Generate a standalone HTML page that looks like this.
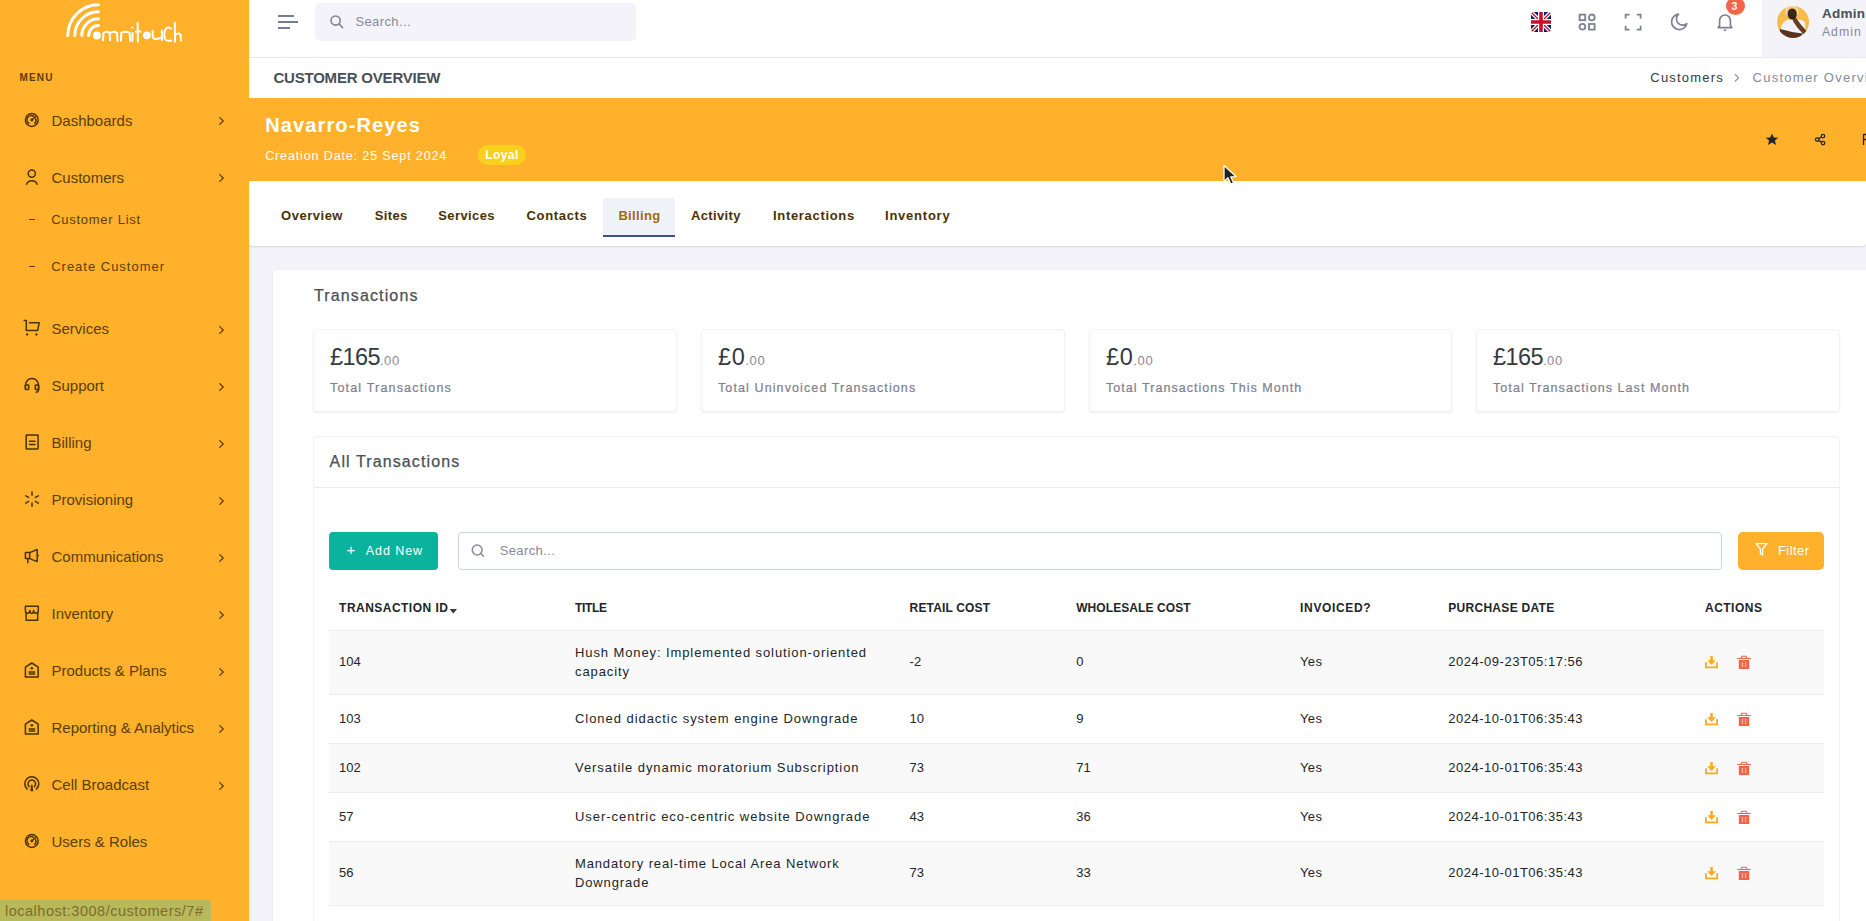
<!DOCTYPE html>
<html><head><meta charset="utf-8"><title>Customer Overview</title>
<style>
html,body{margin:0;padding:0;}
body{width:1866px;height:921px;overflow:hidden;position:relative;background:#f3f3f9;font-family:"Liberation Sans",sans-serif;}
.t{position:absolute;white-space:nowrap;line-height:1;}
svg{overflow:visible}
</style></head><body>
<div style="position:absolute;left:249px;top:0px;width:1617px;height:57px;background:#fff"></div>
<div style="position:absolute;left:249px;top:57px;width:1617px;height:1px;background:#e9e9ef"></div>
<div style="position:absolute;left:249px;top:58px;width:1617px;height:40px;background:#fff"></div>
<div style="position:absolute;left:249px;top:98px;width:1617px;height:83px;background:#FFB12B"></div>
<div style="position:absolute;left:249px;top:181px;width:1617px;height:65px;background:#fff;border-radius:0 0 4px 4px;box-shadow:0 1px 2px rgba(56,65,74,0.15), inset 1px 0 0 rgba(56,65,74,0.06)"></div>
<div style="position:absolute;left:249px;top:246px;width:4px;height:675px;background:linear-gradient(to right, rgba(56,65,74,0.05), rgba(56,65,74,0))"></div>
<div style="position:absolute;left:249px;top:0px;width:2px;height:98px;background:rgba(56,65,74,0.04)"></div>
<div style="position:absolute;left:0px;top:0px;width:249px;height:921px;background:#FFB12B"></div>
<svg style="position:absolute;left:0px;top:0px;" width="249" height="57" viewBox="0 0 249 57">
<g fill="none" stroke="#fff" stroke-width="3" stroke-linecap="round">
<path d="M67.8 35.5 A30.7 30.7 0 0 1 98.5 4.8"/>
<path d="M74.8 35.5 A23.7 23.7 0 0 1 98.5 11.8"/>
<path d="M81.8 35.5 A16.7 16.7 0 0 1 98.5 18.8"/>
<path d="M88.6 35.5 A9.9 9.9 0 0 1 98.5 25.6"/>
</g>
<circle cx="96.8" cy="35.5" r="4" fill="#fff"/>
<circle cx="146.8" cy="35.3" r="3.9" fill="#fff"/>
<g fill="none" stroke="#fff" stroke-width="2" stroke-linecap="round" stroke-linejoin="round">
<path d="M103 40.5 L103.5 33 Q106.5 30.6 109.6 32.8 L110.1 40.3 M110 33.2 Q113.6 30.6 117 33 L117.5 40.8"/>
<path d="M121 40.8 L121.2 33 Q125.2 30.6 129.6 32.8 L130.2 41"/>
<path d="M132.5 33 L132.4 41"/>
<path d="M137.6 22.8 L137.9 41.4 M135.8 31.7 L140.7 31.5"/>
<path d="M152.6 30.8 L152.8 36.5 Q153.5 39.6 157 39 L161.8 37.5 M161.8 30.2 L162 40"/>
<path d="M171 28.6 Q166.6 25.8 164.7 31 Q163.6 36 165 39 Q167 41.9 171.3 40.5"/>
<path d="M174.8 22.8 L175 41.7 M175 35 Q178 32.4 180.6 34.5 L181 40.5"/>
</g>
<circle cx="132.3" cy="27.5" r="1.1" fill="#fff"/>
</svg>
<div class="t" style="left:19.4px;top:72.55px;font-size:10px;color:#5b3e08;font-weight:bold;letter-spacing:1.2px;">MENU</div>
<svg style="position:absolute;left:22px;top:110.4px;" width="20" height="20" viewBox="0 0 20 20"><g fill="none" stroke="#4a3206" stroke-width="1.5" stroke-linecap="round" stroke-linejoin="round"><circle cx="9.8" cy="10" r="6.4"/><path d="M6.8 13.2 A4.1 4.1 0 0 1 11.6 6.3"/><path d="M13.6 8.7 A4.1 4.1 0 0 1 12.8 13.2"/><path d="M9.8 10 L13.4 6.7"/></g><circle cx="9.8" cy="10" r="1.4" fill="#4a3206"/></svg>
<div class="t" style="left:51.5px;top:113.05px;font-size:15px;color:#5b3e08;">Dashboards</div>
<svg style="position:absolute;left:216px;top:115.8px;" width="10" height="10" viewBox="0 0 10 10"><path d="M3.7 1.6 L7.2 5 L3.7 8.4" fill="none" stroke="#5b3e08" stroke-width="1.3" stroke-linecap="round" stroke-linejoin="round"/></svg>
<svg style="position:absolute;left:22px;top:167.4px;" width="20" height="20" viewBox="0 0 20 20"><g fill="none" stroke="#4a3206" stroke-width="1.5" stroke-linecap="round" stroke-linejoin="round"><circle cx="9.8" cy="6.6" r="3.6"/><path d="M4.6 17.3 A5.6 5.3 0 0 1 15.2 17.3"/></g></svg>
<div class="t" style="left:51.5px;top:170.05px;font-size:15px;color:#5b3e08;">Customers</div>
<svg style="position:absolute;left:216px;top:172.8px;" width="10" height="10" viewBox="0 0 10 10"><path d="M3.7 1.6 L7.2 5 L3.7 8.4" fill="none" stroke="#5b3e08" stroke-width="1.3" stroke-linecap="round" stroke-linejoin="round"/></svg>
<svg style="position:absolute;left:22px;top:318.4px;" width="20" height="20" viewBox="0 0 20 20"><g fill="none" stroke="#4a3206" stroke-width="1.5" stroke-linecap="round" stroke-linejoin="round"><path d="M2.2 2.5 L4.3 2.5 L4.3 12.4 L15.7 12.4 L17.2 4.7 L7.4 4.7"/></g><circle cx="5.1" cy="16.5" r="1.15" fill="#4a3206"/><circle cx="14.4" cy="16.5" r="1.15" fill="#4a3206"/></svg>
<div class="t" style="left:51.5px;top:321.05px;font-size:15px;color:#5b3e08;">Services</div>
<svg style="position:absolute;left:216px;top:324.7px;" width="10" height="10" viewBox="0 0 10 10"><path d="M3.7 1.6 L7.2 5 L3.7 8.4" fill="none" stroke="#5b3e08" stroke-width="1.3" stroke-linecap="round" stroke-linejoin="round"/></svg>
<svg style="position:absolute;left:22px;top:375.4px;" width="20" height="20" viewBox="0 0 20 20"><g fill="none" stroke="#4a3206" stroke-width="1.5" stroke-linecap="round" stroke-linejoin="round"><path d="M3.4 13.5 L3.4 10.2 A6.6 6.6 0 0 1 16.6 10.2 L16.6 14.6 Q16.6 16.8 14.3 17.3"/><rect x="3.4" y="10" width="3.3" height="4.6" rx="0.6"/><rect x="13.3" y="10" width="3.3" height="4.6" rx="0.6"/></g></svg>
<div class="t" style="left:51.5px;top:378.05px;font-size:15px;color:#5b3e08;">Support</div>
<svg style="position:absolute;left:216px;top:381.7px;" width="10" height="10" viewBox="0 0 10 10"><path d="M3.7 1.6 L7.2 5 L3.7 8.4" fill="none" stroke="#5b3e08" stroke-width="1.3" stroke-linecap="round" stroke-linejoin="round"/></svg>
<svg style="position:absolute;left:22px;top:432.4px;" width="20" height="20" viewBox="0 0 20 20"><g fill="none" stroke="#4a3206" stroke-width="1.5" stroke-linecap="round" stroke-linejoin="round"><rect x="4.2" y="2.9" width="11.9" height="14.1" rx="0.5"/><path d="M7.5 9.3 L13 9.3 M7.5 12.6 L13 12.6"/></g></svg>
<div class="t" style="left:51.5px;top:435.05px;font-size:15px;color:#5b3e08;">Billing</div>
<svg style="position:absolute;left:216px;top:438.7px;" width="10" height="10" viewBox="0 0 10 10"><path d="M3.7 1.6 L7.2 5 L3.7 8.4" fill="none" stroke="#5b3e08" stroke-width="1.3" stroke-linecap="round" stroke-linejoin="round"/></svg>
<svg style="position:absolute;left:22px;top:489.4px;" width="20" height="20" viewBox="0 0 20 20"><g fill="none" stroke="#4a3206" stroke-width="1.5" stroke-linecap="round" stroke-linejoin="round"><path d="M10 2.9 L10 6.2 M10 14.1 L10 17.3 M3.8 6.9 L6.6 8.4 M13.4 8.4 L16.3 6.9 M3.8 14.1 L6.6 12.3 M13.4 12.3 L16.3 14.1"/></g></svg>
<div class="t" style="left:51.5px;top:492.05px;font-size:15px;color:#5b3e08;">Provisioning</div>
<svg style="position:absolute;left:216px;top:495.7px;" width="10" height="10" viewBox="0 0 10 10"><path d="M3.7 1.6 L7.2 5 L3.7 8.4" fill="none" stroke="#5b3e08" stroke-width="1.3" stroke-linecap="round" stroke-linejoin="round"/></svg>
<svg style="position:absolute;left:22px;top:546.4px;" width="20" height="20" viewBox="0 0 20 20"><g fill="none" stroke="#4a3206" stroke-width="1.5" stroke-linecap="round" stroke-linejoin="round"><rect x="3.4" y="6.6" width="4.3" height="6" rx="0.4"/><path d="M7.7 6.6 L15.2 3.5 L15.2 15.6 L7.7 12.6 M15.2 9.5 L16.3 9.5 M5.8 12.8 L5.8 16.8"/></g></svg>
<div class="t" style="left:51.5px;top:549.05px;font-size:15px;color:#5b3e08;">Communications</div>
<svg style="position:absolute;left:216px;top:552.7px;" width="10" height="10" viewBox="0 0 10 10"><path d="M3.7 1.6 L7.2 5 L3.7 8.4" fill="none" stroke="#5b3e08" stroke-width="1.3" stroke-linecap="round" stroke-linejoin="round"/></svg>
<svg style="position:absolute;left:22px;top:603.4px;" width="20" height="20" viewBox="0 0 20 20"><g fill="none" stroke="#4a3206" stroke-width="1.5" stroke-linecap="round" stroke-linejoin="round"><path d="M3.4 3.2 L16.3 3.2 L16.3 8 Q16.2 10.2 14 10.2 Q11.8 10.2 11.6 7.6 Q11.3 10.4 9.8 10.4 Q8.2 10.4 7.9 7.6 Q7.7 10.2 5.6 10.2 Q3.4 10.2 3.4 8 Z"/><path d="M4.1 10.2 L4.1 17.2 L15.7 17.2 L15.7 10.2"/></g></svg>
<div class="t" style="left:51.5px;top:606.05px;font-size:15px;color:#5b3e08;">Inventory</div>
<svg style="position:absolute;left:216px;top:609.7px;" width="10" height="10" viewBox="0 0 10 10"><path d="M3.7 1.6 L7.2 5 L3.7 8.4" fill="none" stroke="#5b3e08" stroke-width="1.3" stroke-linecap="round" stroke-linejoin="round"/></svg>
<svg style="position:absolute;left:22px;top:660.4px;" width="20" height="20" viewBox="0 0 20 20"><g fill="none" stroke="#4a3206" stroke-width="1.5" stroke-linecap="round" stroke-linejoin="round"><path d="M3.4 7.2 L9.8 3 L16.2 7.2 L16.2 17.1 L3.4 17.1 Z"/><path d="M7.2 12 L12.6 12 M7.2 14.1 L12.6 14.1"/></g><circle cx="9.8" cy="8.2" r="1.3" fill="#4a3206"/></svg>
<div class="t" style="left:51.5px;top:663.05px;font-size:15px;color:#5b3e08;">Products &amp; Plans</div>
<svg style="position:absolute;left:216px;top:666.7px;" width="10" height="10" viewBox="0 0 10 10"><path d="M3.7 1.6 L7.2 5 L3.7 8.4" fill="none" stroke="#5b3e08" stroke-width="1.3" stroke-linecap="round" stroke-linejoin="round"/></svg>
<svg style="position:absolute;left:22px;top:717.4px;" width="20" height="20" viewBox="0 0 20 20"><g fill="none" stroke="#4a3206" stroke-width="1.5" stroke-linecap="round" stroke-linejoin="round"><path d="M3.4 7.2 L9.8 3 L16.2 7.2 L16.2 17.1 L3.4 17.1 Z"/><path d="M7.2 12 L12.6 12 M7.2 14.1 L12.6 14.1"/></g><circle cx="9.8" cy="8.2" r="1.3" fill="#4a3206"/></svg>
<div class="t" style="left:51.5px;top:720.05px;font-size:15px;color:#5b3e08;">Reporting &amp; Analytics</div>
<svg style="position:absolute;left:216px;top:723.7px;" width="10" height="10" viewBox="0 0 10 10"><path d="M3.7 1.6 L7.2 5 L3.7 8.4" fill="none" stroke="#5b3e08" stroke-width="1.3" stroke-linecap="round" stroke-linejoin="round"/></svg>
<svg style="position:absolute;left:22px;top:774.4px;" width="20" height="20" viewBox="0 0 20 20"><g fill="none" stroke="#4a3206" stroke-width="1.5" stroke-linecap="round" stroke-linejoin="round"><path d="M5.2 15.1 A7 7 0 1 1 14.4 15.1"/><path d="M7.2 12.6 A3.8 3.8 0 1 1 12.4 12.6"/></g><path d="M9.1 10.8 L10.5 10.8 L11.2 17.3 L8.4 17.3 Z" fill="#4a3206"/></svg>
<div class="t" style="left:51.5px;top:777.05px;font-size:15px;color:#5b3e08;">Cell Broadcast</div>
<svg style="position:absolute;left:216px;top:780.7px;" width="10" height="10" viewBox="0 0 10 10"><path d="M3.7 1.6 L7.2 5 L3.7 8.4" fill="none" stroke="#5b3e08" stroke-width="1.3" stroke-linecap="round" stroke-linejoin="round"/></svg>
<svg style="position:absolute;left:22px;top:831.4px;" width="20" height="20" viewBox="0 0 20 20"><g fill="none" stroke="#4a3206" stroke-width="1.5" stroke-linecap="round" stroke-linejoin="round"><circle cx="9.8" cy="10" r="6.4"/><path d="M6.8 13.2 A4.1 4.1 0 0 1 11.6 6.3"/><path d="M13.6 8.7 A4.1 4.1 0 0 1 12.8 13.2"/><path d="M9.8 10 L13.4 6.7"/></g><circle cx="9.8" cy="10" r="1.4" fill="#4a3206"/></svg>
<div class="t" style="left:51.5px;top:834.05px;font-size:15px;color:#5b3e08;">Users &amp; Roles</div>
<div style="position:absolute;left:28.7px;top:218.8px;width:6.5px;height:1.4px;background:#5b3e08"></div>
<div class="t" style="left:51.2px;top:213.05px;font-size:13px;color:#5b3e08;letter-spacing:0.73px;">Customer List</div>
<div style="position:absolute;left:28.7px;top:265.7px;width:6.5px;height:1.4px;background:#5b3e08"></div>
<div class="t" style="left:51.2px;top:260.05px;font-size:13px;color:#5b3e08;letter-spacing:0.99px;">Create Customer</div>
<div style="position:absolute;left:0px;top:900px;width:211px;height:21px;background:#b7b95b;border-top-right-radius:4px"></div>
<div class="t" style="left:4.9px;top:903.80px;font-size:14.5px;color:#7e6c2c;letter-spacing:0.52px;">localhost:3008/customers/7#</div>
<svg style="position:absolute;left:276px;top:13px;" width="24" height="18" viewBox="0 0 24 18"><g stroke="#60657a" stroke-width="1.7"><path d="M2 3 L18 3"/><path d="M2 9 L22 9"/><path d="M2 15 L14 15"/></g></svg>
<div style="position:absolute;left:315px;top:3px;width:321px;height:38px;background:#f3f3f9;border-radius:5px"></div>
<svg style="position:absolute;left:328px;top:13px;" width="18" height="18" viewBox="0 0 18 18"><g fill="none" stroke="#7f8394" stroke-width="1.55" stroke-linecap="round"><circle cx="7.6" cy="7.5" r="4.6"/><path d="M11 11 L14.6 14.6"/></g></svg>
<div class="t" style="left:355.4px;top:15.05px;font-size:13px;color:#878a99;letter-spacing:0.39px;">Search...</div>
<svg style="position:absolute;left:1531px;top:12px;" width="20" height="20" viewBox="0 0 20 20"><defs><clipPath id="fc"><rect x="0" y="0" width="20" height="20" rx="3.5"/></clipPath></defs>
<g clip-path="url(#fc)"><rect width="20" height="20" fill="#012169"/>
<path d="M0 0 L20 20 M20 0 L0 20" stroke="#fff" stroke-width="4"/>
<path d="M0 0 L20 20 M20 0 L0 20" stroke="#C8102E" stroke-width="1.4"/>
<path d="M10 0 V20 M0 10 H20" stroke="#fff" stroke-width="6"/>
<path d="M10 0 V20 M0 10 H20" stroke="#C8102E" stroke-width="3.6"/></g></svg>
<svg style="position:absolute;left:1578px;top:13px;" width="19" height="19" viewBox="0 0 19 19"><g fill="none" stroke="#7d8291" stroke-width="1.8"><rect x="1.6" y="1.6" width="5.6" height="5.6"/><circle cx="13.8" cy="4.4" r="2.9"/><circle cx="4.4" cy="13.8" r="2.9"/><rect x="11" y="11" width="5.6" height="5.6"/></g></svg>
<svg style="position:absolute;left:1624px;top:13px;" width="19" height="19" viewBox="0 0 19 19"><g fill="none" stroke="#7d8291" stroke-width="1.8"><path d="M1.6 5.5 V1.6 H5.5 M12.7 1.6 H16.6 V5.5 M16.6 12.7 V16.6 H12.7 M5.5 16.6 H1.6 V12.7"/></g></svg>
<svg style="position:absolute;left:1669px;top:12px;" width="20" height="20" viewBox="0 0 20 20"><path d="M9.6 2.2 A7.7 7.7 0 1 0 17.8 11.6 A6.2 6.2 0 0 1 9.6 2.2 Z" fill="none" stroke="#7d8291" stroke-width="1.7" stroke-linejoin="round"/></svg>
<svg style="position:absolute;left:1715px;top:12px;" width="20" height="22" viewBox="0 0 20 22"><g fill="none" stroke="#7d8291" stroke-width="1.7" stroke-linejoin="round"><path d="M3.2 15.6 L4.6 13.6 L4.6 8.4 A5.4 5.4 0 0 1 15.4 8.4 L15.4 13.6 L16.8 15.6 Z"/></g><path d="M8 17.6 L12 17.6 L10 19.6 Z" fill="#7d8291"/></svg>
<div style="position:absolute;left:1726px;top:-3px;width:19px;height:18px;background:#f06548;border-radius:50%"></div>
<div class="t" style="left:1731.6px;top:0.80px;font-size:10.5px;color:#fff;font-weight:bold;">3</div>
<div style="position:absolute;left:1762px;top:0px;width:104px;height:57px;background:#f3f3f9"></div>
<svg style="position:absolute;left:1777px;top:6px;" width="32" height="32" viewBox="0 0 32 32"><defs><clipPath id="av"><circle cx="16" cy="16" r="16"/></clipPath></defs>
<g clip-path="url(#av)"><rect width="32" height="32" fill="#f8bb47"/>
<path d="M3.5 33 L4.2 21 Q6 14.5 12 13.6 L22 13.6 Q27 14.5 28 17 L29 33 Z" fill="#f2f2f4"/>
<ellipse cx="15" cy="5.6" rx="5.8" ry="5" fill="none" stroke="#eadfce" stroke-width="1.5"/>
<ellipse cx="15.2" cy="8" rx="4.6" ry="5.6" fill="#3d2419"/>
<path d="M14 12 Q15.5 14.5 18 13.5 L18.5 10.5 Z" fill="#2a1811"/>
<path d="M18.2 14.5 L22.5 20.5 L27.2 25.8" fill="none" stroke="#6a3a23" stroke-width="4.6" stroke-linecap="round"/>
<path d="M2.8 23 Q10 24.5 15 26 L25.5 27.6 L25 33 L3 33 Z" fill="#58321f"/>
</g></svg>
<div class="t" style="left:1821.9px;top:6.80px;font-size:13.5px;color:#495057;font-weight:bold;letter-spacing:0.3px;">Admin</div>
<div class="t" style="left:1821.9px;top:25.90px;font-size:12.3px;color:#878a99;letter-spacing:1.0px;">Admin</div>
<div class="t" style="left:273.4px;top:70.05px;font-size:15px;color:#495057;font-weight:bold;letter-spacing:-0.2px;">CUSTOMER OVERVIEW</div>
<div class="t" style="left:1650.3px;top:71.05px;font-size:13px;color:#343a40;letter-spacing:1.2px;">Customers</div>
<svg style="position:absolute;left:1731px;top:72px;" width="12" height="12" viewBox="0 0 12 12"><path d="M4.2 2.4 L7.6 5.8 L4.2 9.2" fill="none" stroke="#878a99" stroke-width="1.2" stroke-linecap="round" stroke-linejoin="round"/></svg>
<div class="t" style="left:1752.6px;top:71.05px;font-size:13px;color:#878a99;letter-spacing:1.25px;">Customer Overview</div>
<div class="t" style="left:265.2px;top:115.05px;font-size:20px;color:#fff;font-weight:bold;letter-spacing:1.13px;">Navarro-Reyes</div>
<div class="t" style="left:265.2px;top:149.80px;font-size:12.5px;color:#fff;letter-spacing:0.87px;">Creation Date: 25 Sept 2024</div>
<div style="position:absolute;left:478px;top:145px;width:48px;height:20px;background:#f9d11d;border-radius:10px"></div>
<div class="t" style="left:485.3px;top:149.05px;font-size:12px;color:#fff;font-weight:bold;letter-spacing:0.4px;">Loyal</div>
<svg style="position:absolute;left:1764px;top:131px;" width="16" height="16" viewBox="0 0 16 16"><path d="M8 2.6 L9.8 6.5 L14.3 6.8 L10.9 9.6 L12 13.9 L8 11.5 L4 13.9 L5.1 9.6 L1.7 6.8 L6.2 6.5 Z" fill="#212529"/></svg>
<svg style="position:absolute;left:1812px;top:131px;" width="16" height="16" viewBox="0 0 16 16"><g fill="none" stroke="#212529" stroke-width="1.25"><circle cx="5.2" cy="8.5" r="1.75"/><circle cx="11" cy="5.1" r="1.75"/><circle cx="11" cy="12" r="1.75"/><path d="M6.7 7.6 L9.5 6 M6.7 9.4 L9.5 11.1"/></g></svg>
<svg style="position:absolute;left:1860px;top:131px;" width="6" height="16" viewBox="0 0 6 16"><path d="M3.5 3 L3.5 14 M3.5 3.5 L6 3.5 M3.5 8.5 L6 8.5" fill="none" stroke="#212529" stroke-width="1.3"/></svg>
<svg style="position:absolute;left:1222.4px;top:163.8px;" width="18" height="24" viewBox="0 0 18 24"><path d="M2 1.5 L2 17.5 L6 13.8 L8.8 20.2 L11.6 19 L8.8 12.8 L14 12.6 Z" fill="#222" stroke="#fff" stroke-width="1.3" stroke-linejoin="round"/></svg>
<div style="position:absolute;left:603px;top:198px;width:72px;height:39px;background:#eff2f7;border-radius:4px 4px 0 0"></div>
<div style="position:absolute;left:603px;top:234.5px;width:72px;height:2.2px;background:#405189"></div>
<div class="t" style="left:281.1px;top:209.05px;font-size:13px;color:#4a3102;font-weight:bold;letter-spacing:0.51px;">Overview</div>
<div class="t" style="left:374.8px;top:209.05px;font-size:13px;color:#4a3102;font-weight:bold;letter-spacing:0.35px;">Sites</div>
<div class="t" style="left:438.2px;top:209.05px;font-size:13px;color:#4a3102;font-weight:bold;letter-spacing:0.41px;">Services</div>
<div class="t" style="left:526.5px;top:209.05px;font-size:13px;color:#4a3102;font-weight:bold;letter-spacing:0.66px;">Contacts</div>
<div class="t" style="left:618.4px;top:209.05px;font-size:13px;color:#a06a0e;font-weight:bold;letter-spacing:0.33px;">Billing</div>
<div class="t" style="left:690.9px;top:209.05px;font-size:13px;color:#4a3102;font-weight:bold;letter-spacing:0.36px;">Activity</div>
<div class="t" style="left:773.0px;top:209.05px;font-size:13px;color:#4a3102;font-weight:bold;letter-spacing:0.68px;">Interactions</div>
<div class="t" style="left:885.0px;top:209.05px;font-size:13px;color:#4a3102;font-weight:bold;letter-spacing:0.77px;">Inventory</div>
<div style="position:absolute;left:273px;top:270px;width:1640px;height:700px;background:#fff;border-radius:4px;box-shadow:0 1px 2px rgba(56,65,74,0.12)"></div>
<div class="t" style="left:313.9px;top:287.55px;font-size:16px;color:#495057;letter-spacing:1.14px;-webkit-text-stroke:0.25px #495057;">Transactions</div>
<div style="position:absolute;left:313px;top:329px;width:364px;height:83px;background:#fff;border:1px solid #f1f2f4;box-sizing:border-box;border-radius:4px;box-shadow:0 1px 2px rgba(56,65,74,0.08)"></div>
<div class="t" style="left:330.0px;top:346.30px;font-size:23.5px;color:#343a40;letter-spacing:-0.6px;display:flex;align-items:baseline">£165<span style="font-size:13px;color:#878a99;letter-spacing:0.6px">.00</span></div>
<div class="t" style="left:330.0px;top:381.80px;font-size:12.5px;color:#7c8090;letter-spacing:1.18px;-webkit-text-stroke:0.2px #7c8090;">Total Transactions</div>
<div style="position:absolute;left:701px;top:329px;width:364px;height:83px;background:#fff;border:1px solid #f1f2f4;box-sizing:border-box;border-radius:4px;box-shadow:0 1px 2px rgba(56,65,74,0.08)"></div>
<div class="t" style="left:718.0px;top:346.30px;font-size:23.5px;color:#343a40;letter-spacing:0.6px;display:flex;align-items:baseline">£0<span style="font-size:13px;color:#878a99;letter-spacing:0.6px">.00</span></div>
<div class="t" style="left:718.0px;top:381.80px;font-size:12.5px;color:#7c8090;letter-spacing:1.11px;-webkit-text-stroke:0.2px #7c8090;">Total Uninvoiced Transactions</div>
<div style="position:absolute;left:1089px;top:329px;width:363px;height:83px;background:#fff;border:1px solid #f1f2f4;box-sizing:border-box;border-radius:4px;box-shadow:0 1px 2px rgba(56,65,74,0.08)"></div>
<div class="t" style="left:1106.0px;top:346.30px;font-size:23.5px;color:#343a40;letter-spacing:0.6px;display:flex;align-items:baseline">£0<span style="font-size:13px;color:#878a99;letter-spacing:0.6px">.00</span></div>
<div class="t" style="left:1106.0px;top:381.80px;font-size:12.5px;color:#7c8090;letter-spacing:1.05px;-webkit-text-stroke:0.2px #7c8090;">Total Transactions This Month</div>
<div style="position:absolute;left:1476px;top:329px;width:364px;height:83px;background:#fff;border:1px solid #f1f2f4;box-sizing:border-box;border-radius:4px;box-shadow:0 1px 2px rgba(56,65,74,0.08)"></div>
<div class="t" style="left:1493.0px;top:346.30px;font-size:23.5px;color:#343a40;letter-spacing:-0.6px;display:flex;align-items:baseline">£165<span style="font-size:13px;color:#878a99;letter-spacing:0.6px">.00</span></div>
<div class="t" style="left:1493.0px;top:381.80px;font-size:12.5px;color:#7c8090;letter-spacing:1.07px;-webkit-text-stroke:0.2px #7c8090;">Total Transactions Last Month</div>
<div style="position:absolute;left:313px;top:436px;width:1527px;height:600px;background:#fff;border:1px solid #f1f2f4;box-sizing:border-box;border-radius:4px"></div>
<div class="t" style="left:329.6px;top:453.55px;font-size:16px;color:#495057;letter-spacing:1.11px;-webkit-text-stroke:0.25px #495057;">All Transactions</div>
<div style="position:absolute;left:314px;top:487px;width:1525px;height:1px;background:#e9ebec"></div>
<div style="position:absolute;left:329px;top:532px;width:109px;height:38px;background:#0ab39c;border-radius:4px"></div>
<div class="t" style="left:346.5px;top:542.05px;font-size:15px;color:#fff;">+</div>
<div class="t" style="left:365.7px;top:544.80px;font-size:12.5px;color:#fff;letter-spacing:0.95px;">Add New</div>
<div style="position:absolute;left:458px;top:532px;width:1264px;height:38px;border:1px solid #ced4da;box-sizing:border-box;border-radius:4px;background:#fff"></div>
<svg style="position:absolute;left:470px;top:543px;" width="16" height="16" viewBox="0 0 16 16"><g fill="none" stroke="#878a99" stroke-width="1.5" stroke-linecap="round"><circle cx="7.2" cy="7" r="4.9"/><path d="M10.7 10.5 L13.4 13.2"/></g></svg>
<div class="t" style="left:499.7px;top:544.05px;font-size:13px;color:#878a99;letter-spacing:0.39px;">Search...</div>
<div style="position:absolute;left:1738px;top:532px;width:86px;height:38px;background:#FFB12B;border-radius:5px"></div>
<svg style="position:absolute;left:1754px;top:542px;" width="15" height="15" viewBox="0 0 15 15"><path d="M2 1.6 L13 1.6 L8.6 7 L8.6 13 L6.4 11.8 L6.4 7 Z" fill="none" stroke="#fff" stroke-width="1.3" stroke-linejoin="round"/></svg>
<div class="t" style="left:1778.0px;top:544.05px;font-size:13px;color:#fff;letter-spacing:0.42px;">Filter</div>
<div class="t" style="left:339.1px;top:602.05px;font-size:12px;color:#212529;font-weight:bold;letter-spacing:0.47px;">TRANSACTION ID</div>
<div class="t" style="left:575.0px;top:602.05px;font-size:12px;color:#212529;font-weight:bold;letter-spacing:-0.3px;">TITLE</div>
<div class="t" style="left:909.6px;top:602.05px;font-size:12px;color:#212529;font-weight:bold;letter-spacing:0.16px;">RETAIL COST</div>
<div class="t" style="left:1076.2px;top:602.05px;font-size:12px;color:#212529;font-weight:bold;letter-spacing:0.08px;">WHOLESALE COST</div>
<div class="t" style="left:1300.1px;top:602.05px;font-size:12px;color:#212529;font-weight:bold;letter-spacing:0.65px;">INVOICED?</div>
<div class="t" style="left:1448.2px;top:602.05px;font-size:12px;color:#212529;font-weight:bold;letter-spacing:0.3px;">PURCHASE DATE</div>
<div class="t" style="left:1705.0px;top:602.05px;font-size:12px;color:#212529;font-weight:bold;letter-spacing:0.48px;">ACTIONS</div>
<svg style="position:absolute;left:449px;top:608px;" width="9" height="7" viewBox="0 0 9 7"><path d="M0.6 1 L8 1 L4.3 5.6 Z" fill="#343a40"/></svg>
<div style="position:absolute;left:329px;top:630px;width:1495px;height:1px;background:#e9ebec"></div>
<div style="position:absolute;left:329px;top:631px;width:1495px;height:63px;background:#f9f9f9"></div>
<div style="position:absolute;left:329px;top:694px;width:1495px;height:1px;background:#e9ebec"></div>
<div class="t" style="left:339.1px;top:655.05px;font-size:13px;color:#212529;">104</div>
<div class="t" style="left:575.0px;top:646.05px;font-size:13px;color:#212529;letter-spacing:0.9px;">Hush Money: Implemented solution-oriented</div>
<div class="t" style="left:575.0px;top:665.05px;font-size:13px;color:#212529;letter-spacing:0.9px;">capacity</div>
<div class="t" style="left:909.6px;top:655.05px;font-size:13px;color:#212529;">-2</div>
<div class="t" style="left:1076.2px;top:655.05px;font-size:13px;color:#212529;">0</div>
<div class="t" style="left:1300.1px;top:655.05px;font-size:13px;color:#212529;letter-spacing:0.3px;">Yes</div>
<div class="t" style="left:1448.2px;top:655.05px;font-size:13px;color:#212529;letter-spacing:0.52px;">2024-09-23T05:17:56</div>
<svg style="position:absolute;left:1704px;top:655.0px;" width="15" height="14" viewBox="0 0 15 14"><g fill="none" stroke="#ffa91f" stroke-width="1.8"><path d="M1.9 7.2 L1.9 12.3 L13.1 12.3 L13.1 7.2"/></g><path d="M6.3 1 L8.8 1 L8.8 5.2 L11.9 5.2 L7.55 9.9 L3.2 5.2 L6.3 5.2 Z" fill="#ffa91f"/></svg>
<svg style="position:absolute;left:1736px;top:655.0px;" width="16" height="15" viewBox="0 0 16 15"><path d="M1.2 3 L14.8 3 L14.8 4 L1.2 4 Z" fill="#f06548"/><path d="M5 3.2 L5.8 1.3 L10.2 1.3 L11 3.2" fill="none" stroke="#f06548" stroke-width="1.1"/><rect x="2.8" y="5" width="10.4" height="9" fill="#f06548"/><path d="M6.4 7 L6.4 12 M9.6 7 L9.6 12" stroke="#fbd4cb" stroke-width="0.9"/></svg>
<div style="position:absolute;left:329px;top:695px;width:1495px;height:48px;background:#fff"></div>
<div style="position:absolute;left:329px;top:743px;width:1495px;height:1px;background:#e9ebec"></div>
<div class="t" style="left:339.1px;top:712.05px;font-size:13px;color:#212529;">103</div>
<div class="t" style="left:575.0px;top:712.05px;font-size:13px;color:#212529;letter-spacing:0.95px;">Cloned didactic system engine Downgrade</div>
<div class="t" style="left:909.6px;top:712.05px;font-size:13px;color:#212529;">10</div>
<div class="t" style="left:1076.2px;top:712.05px;font-size:13px;color:#212529;">9</div>
<div class="t" style="left:1300.1px;top:712.05px;font-size:13px;color:#212529;letter-spacing:0.3px;">Yes</div>
<div class="t" style="left:1448.2px;top:712.05px;font-size:13px;color:#212529;letter-spacing:0.52px;">2024-10-01T06:35:43</div>
<svg style="position:absolute;left:1704px;top:711.5px;" width="15" height="14" viewBox="0 0 15 14"><g fill="none" stroke="#ffa91f" stroke-width="1.8"><path d="M1.9 7.2 L1.9 12.3 L13.1 12.3 L13.1 7.2"/></g><path d="M6.3 1 L8.8 1 L8.8 5.2 L11.9 5.2 L7.55 9.9 L3.2 5.2 L6.3 5.2 Z" fill="#ffa91f"/></svg>
<svg style="position:absolute;left:1736px;top:711.5px;" width="16" height="15" viewBox="0 0 16 15"><path d="M1.2 3 L14.8 3 L14.8 4 L1.2 4 Z" fill="#f06548"/><path d="M5 3.2 L5.8 1.3 L10.2 1.3 L11 3.2" fill="none" stroke="#f06548" stroke-width="1.1"/><rect x="2.8" y="5" width="10.4" height="9" fill="#f06548"/><path d="M6.4 7 L6.4 12 M9.6 7 L9.6 12" stroke="#fbd4cb" stroke-width="0.9"/></svg>
<div style="position:absolute;left:329px;top:744px;width:1495px;height:48px;background:#f9f9f9"></div>
<div style="position:absolute;left:329px;top:792px;width:1495px;height:1px;background:#e9ebec"></div>
<div class="t" style="left:339.1px;top:761.05px;font-size:13px;color:#212529;">102</div>
<div class="t" style="left:575.0px;top:761.05px;font-size:13px;color:#212529;letter-spacing:0.93px;">Versatile dynamic moratorium Subscription</div>
<div class="t" style="left:909.6px;top:761.05px;font-size:13px;color:#212529;">73</div>
<div class="t" style="left:1076.2px;top:761.05px;font-size:13px;color:#212529;">71</div>
<div class="t" style="left:1300.1px;top:761.05px;font-size:13px;color:#212529;letter-spacing:0.3px;">Yes</div>
<div class="t" style="left:1448.2px;top:761.05px;font-size:13px;color:#212529;letter-spacing:0.52px;">2024-10-01T06:35:43</div>
<svg style="position:absolute;left:1704px;top:760.5px;" width="15" height="14" viewBox="0 0 15 14"><g fill="none" stroke="#ffa91f" stroke-width="1.8"><path d="M1.9 7.2 L1.9 12.3 L13.1 12.3 L13.1 7.2"/></g><path d="M6.3 1 L8.8 1 L8.8 5.2 L11.9 5.2 L7.55 9.9 L3.2 5.2 L6.3 5.2 Z" fill="#ffa91f"/></svg>
<svg style="position:absolute;left:1736px;top:760.5px;" width="16" height="15" viewBox="0 0 16 15"><path d="M1.2 3 L14.8 3 L14.8 4 L1.2 4 Z" fill="#f06548"/><path d="M5 3.2 L5.8 1.3 L10.2 1.3 L11 3.2" fill="none" stroke="#f06548" stroke-width="1.1"/><rect x="2.8" y="5" width="10.4" height="9" fill="#f06548"/><path d="M6.4 7 L6.4 12 M9.6 7 L9.6 12" stroke="#fbd4cb" stroke-width="0.9"/></svg>
<div style="position:absolute;left:329px;top:793px;width:1495px;height:48px;background:#fff"></div>
<div style="position:absolute;left:329px;top:841px;width:1495px;height:1px;background:#e9ebec"></div>
<div class="t" style="left:339.1px;top:810.05px;font-size:13px;color:#212529;">57</div>
<div class="t" style="left:575.0px;top:810.05px;font-size:13px;color:#212529;letter-spacing:0.96px;">User-centric eco-centric website Downgrade</div>
<div class="t" style="left:909.6px;top:810.05px;font-size:13px;color:#212529;">43</div>
<div class="t" style="left:1076.2px;top:810.05px;font-size:13px;color:#212529;">36</div>
<div class="t" style="left:1300.1px;top:810.05px;font-size:13px;color:#212529;letter-spacing:0.3px;">Yes</div>
<div class="t" style="left:1448.2px;top:810.05px;font-size:13px;color:#212529;letter-spacing:0.52px;">2024-10-01T06:35:43</div>
<svg style="position:absolute;left:1704px;top:809.5px;" width="15" height="14" viewBox="0 0 15 14"><g fill="none" stroke="#ffa91f" stroke-width="1.8"><path d="M1.9 7.2 L1.9 12.3 L13.1 12.3 L13.1 7.2"/></g><path d="M6.3 1 L8.8 1 L8.8 5.2 L11.9 5.2 L7.55 9.9 L3.2 5.2 L6.3 5.2 Z" fill="#ffa91f"/></svg>
<svg style="position:absolute;left:1736px;top:809.5px;" width="16" height="15" viewBox="0 0 16 15"><path d="M1.2 3 L14.8 3 L14.8 4 L1.2 4 Z" fill="#f06548"/><path d="M5 3.2 L5.8 1.3 L10.2 1.3 L11 3.2" fill="none" stroke="#f06548" stroke-width="1.1"/><rect x="2.8" y="5" width="10.4" height="9" fill="#f06548"/><path d="M6.4 7 L6.4 12 M9.6 7 L9.6 12" stroke="#fbd4cb" stroke-width="0.9"/></svg>
<div style="position:absolute;left:329px;top:842px;width:1495px;height:63px;background:#f9f9f9"></div>
<div style="position:absolute;left:329px;top:905px;width:1495px;height:1px;background:#e9ebec"></div>
<div class="t" style="left:339.1px;top:866.05px;font-size:13px;color:#212529;">56</div>
<div class="t" style="left:575.0px;top:857.05px;font-size:13px;color:#212529;letter-spacing:0.86px;">Mandatory real-time Local Area Network</div>
<div class="t" style="left:575.0px;top:876.05px;font-size:13px;color:#212529;letter-spacing:0.86px;">Downgrade</div>
<div class="t" style="left:909.6px;top:866.05px;font-size:13px;color:#212529;">73</div>
<div class="t" style="left:1076.2px;top:866.05px;font-size:13px;color:#212529;">33</div>
<div class="t" style="left:1300.1px;top:866.05px;font-size:13px;color:#212529;letter-spacing:0.3px;">Yes</div>
<div class="t" style="left:1448.2px;top:866.05px;font-size:13px;color:#212529;letter-spacing:0.52px;">2024-10-01T06:35:43</div>
<svg style="position:absolute;left:1704px;top:866.0px;" width="15" height="14" viewBox="0 0 15 14"><g fill="none" stroke="#ffa91f" stroke-width="1.8"><path d="M1.9 7.2 L1.9 12.3 L13.1 12.3 L13.1 7.2"/></g><path d="M6.3 1 L8.8 1 L8.8 5.2 L11.9 5.2 L7.55 9.9 L3.2 5.2 L6.3 5.2 Z" fill="#ffa91f"/></svg>
<svg style="position:absolute;left:1736px;top:866.0px;" width="16" height="15" viewBox="0 0 16 15"><path d="M1.2 3 L14.8 3 L14.8 4 L1.2 4 Z" fill="#f06548"/><path d="M5 3.2 L5.8 1.3 L10.2 1.3 L11 3.2" fill="none" stroke="#f06548" stroke-width="1.1"/><rect x="2.8" y="5" width="10.4" height="9" fill="#f06548"/><path d="M6.4 7 L6.4 12 M9.6 7 L9.6 12" stroke="#fbd4cb" stroke-width="0.9"/></svg>
</body></html>
